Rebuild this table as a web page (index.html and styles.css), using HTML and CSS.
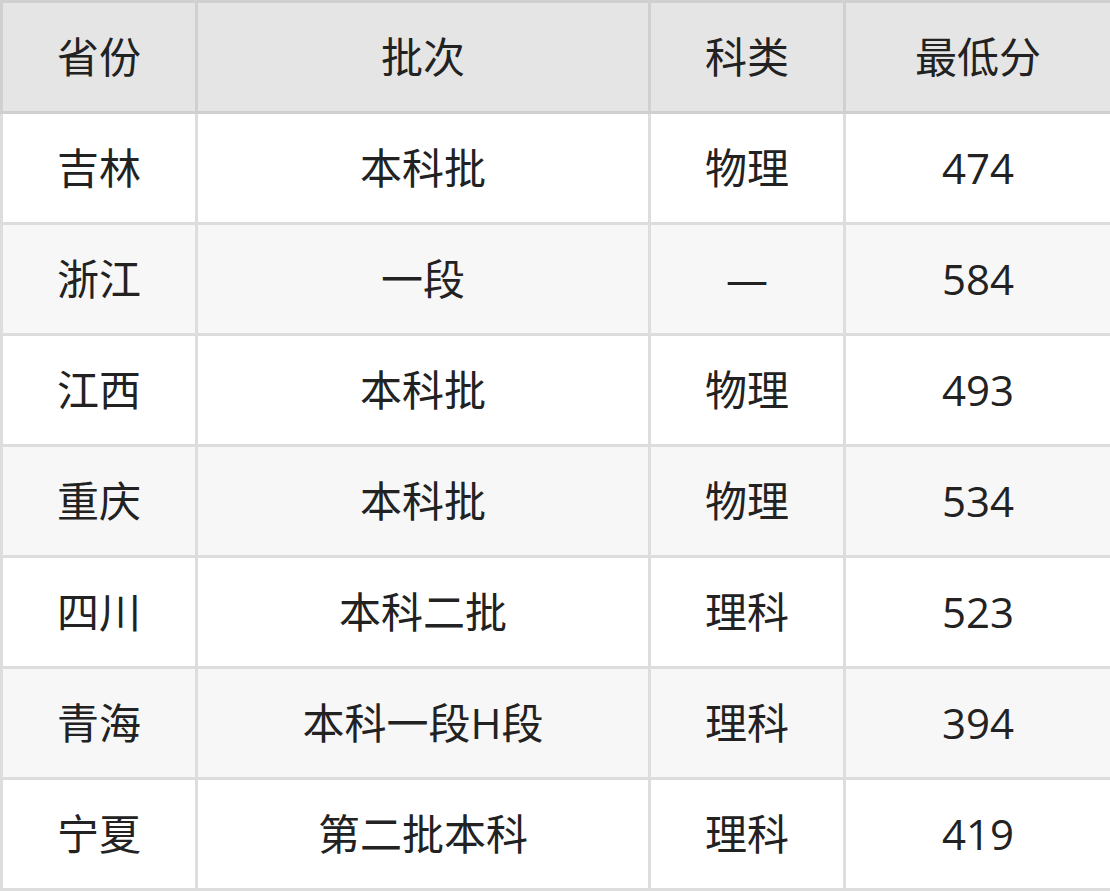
FILE: index.html
```html
<!DOCTYPE html>
<html lang="zh">
<head>
<meta charset="utf-8">
<link rel="stylesheet" href="styles.css">
</head>
<body>
<table class="score-table">
  <colgroup>
    <col class="c1"><col class="c2"><col class="c3"><col class="c4">
  </colgroup>
  <thead>
    <tr><th>省份</th><th>批次</th><th>科类</th><th>最低分</th></tr>
  </thead>
  <tbody>
    <tr><td>吉林</td><td>本科批</td><td>物理</td><td>474</td></tr>
    <tr><td>浙江</td><td>一段</td><td>—</td><td>584</td></tr>
    <tr><td>江西</td><td>本科批</td><td>物理</td><td>493</td></tr>
    <tr><td>重庆</td><td>本科批</td><td>物理</td><td>534</td></tr>
    <tr><td>四川</td><td>本科二批</td><td>理科</td><td>523</td></tr>
    <tr><td>青海</td><td>本科一段H段</td><td>理科</td><td>394</td></tr>
    <tr><td>宁夏</td><td>第二批本科</td><td>理科</td><td>419</td></tr>
  </tbody>
</table>
</body>
</html>
```
FILE: styles.css
```css
html, body {
  margin: 0;
  padding: 0;
  background: #ffffff;
}
.score-table {
  width: 1110px;
  border-collapse: collapse;
  table-layout: fixed;
  font-family: "Open Sans", "Noto Sans CJK SC", sans-serif;
  font-size: 42px;
  color: #222222;
}
.c1 { width: 195px; }
.c2 { width: 453px; }
.c3 { width: 195px; }
.c4 { width: 267px; }
.score-table th,
.score-table td {
  border: 3px solid #dddddd;
  height: 108px;
  padding: 0;
  text-align: center;
  vertical-align: middle;
  font-weight: normal;
  line-height: 1.2;
}
.score-table th {
  background: #e5e5e5;
  border-color: #d0d0d0;
}
.score-table tbody tr:nth-child(odd) td { background: #ffffff; }
.score-table tbody tr:nth-child(even) td { background: #f7f7f7; }
```
